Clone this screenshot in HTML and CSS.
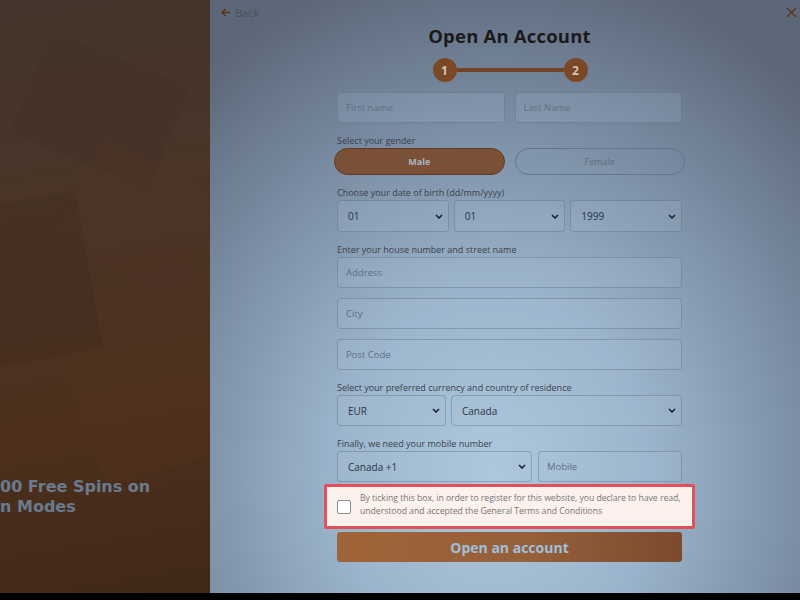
FILE: index.html
```html
<!DOCTYPE html>
<html lang="en">
<head>
<meta charset="utf-8">
<title>Open An Account</title>
<link rel="stylesheet" href="styles.css">
</head>
<body>
<div class="screen">
  <aside class="promo">
    <div class="promo-shape s1"></div>
    <div class="promo-shape s2"></div>
    <div class="promo-shape s3"></div>
    <div class="promo-shape s4"></div>
    <div class="promo-text">
      <div>00 Free Spins on</div>
      <div>n Modes</div>
    </div>
  </aside>
  <main class="panel">
    <div class="topbar">
      <a class="back">
        <svg width="10" height="9" viewBox="0 0 10 9"><path d="M9 4.5H1.5M4.5 1L1 4.5L4.5 8" fill="none" stroke="#5a3418" stroke-width="1.4"/></svg>
        <span>Back</span>
      </a>
      <span class="close">
        <svg width="11" height="11" viewBox="0 0 11 11"><path d="M1 1L10 10M10 1L1 10" stroke="#5a3418" stroke-width="1.4"/></svg>
      </span>
    </div>
    <div class="form">
      <h1 class="title">Open An Account</h1>
      <div class="stepper">
        <span class="step">1</span>
        <span class="step-line"></span>
        <span class="step">2</span>
      </div>

      <div class="row names">
        <input class="field w-half" placeholder="First name">
        <input class="field w-half" placeholder="Last Name">
      </div>

      <div class="label">Select your gender</div>
      <div class="row gender">
        <span class="pill active">Male</span>
        <span class="pill">Female</span>
      </div>

      <div class="label">Choose your date of birth (dd/mm/yyyy)</div>
      <div class="row dob">
        <div class="field select"><span>01</span><svg class="chev" width="8" height="5" viewBox="0 0 8 5"><path d="M1 1L4 4L7 1" fill="none" stroke="#1e232b" stroke-width="1.6"/></svg></div>
        <div class="field select"><span>01</span><svg class="chev" width="8" height="5" viewBox="0 0 8 5"><path d="M1 1L4 4L7 1" fill="none" stroke="#1e232b" stroke-width="1.6"/></svg></div>
        <div class="field select"><span>1999</span><svg class="chev" width="8" height="5" viewBox="0 0 8 5"><path d="M1 1L4 4L7 1" fill="none" stroke="#1e232b" stroke-width="1.6"/></svg></div>
      </div>

      <div class="label">Enter your house number and street name</div>
      <input class="field full" placeholder="Address">
      <input class="field full spaced" placeholder="City">
      <input class="field full spaced" placeholder="Post Code">

      <div class="label">Select your preferred currency and country of residence</div>
      <div class="row currency">
        <div class="field select cur"><span>EUR</span><svg class="chev" width="8" height="5" viewBox="0 0 8 5"><path d="M1 1L4 4L7 1" fill="none" stroke="#1e232b" stroke-width="1.6"/></svg></div>
        <div class="field select country"><span>Canada</span><svg class="chev" width="8" height="5" viewBox="0 0 8 5"><path d="M1 1L4 4L7 1" fill="none" stroke="#1e232b" stroke-width="1.6"/></svg></div>
      </div>

      <div class="label">Finally, we need your mobile number</div>
      <div class="row mobile">
        <div class="field select code"><span>Canada +1</span><svg class="chev" width="8" height="5" viewBox="0 0 8 5"><path d="M1 1L4 4L7 1" fill="none" stroke="#1e232b" stroke-width="1.6"/></svg></div>
        <input class="field phone" placeholder="Mobile">
      </div>

      <div class="terms">
        <span class="checkbox"></span>
        <p>By ticking this box, in order to register for this website, you declare to have read, understood and accepted the General Terms and Conditions</p>
      </div>

      <button class="submit">Open an account</button>
    </div>
  </main>
</div>
</body>
</html>
```
FILE: styles.css
```css
* { box-sizing: border-box; }
html, body { margin: 0; padding: 0; }
body {
  background: #000;
  font-family: "Open Sans", "Liberation Sans", sans-serif;
  width: 800px;
  height: 600px;
  overflow: hidden;
}
.screen {
  display: flex;
  height: 593px;
}
.promo {
  width: 210px;
  flex: none;
  position: relative;
  overflow: hidden;
  background: linear-gradient(170deg, #44352c 0%, #4a3427 35%, #4d301d 70%, #402819 100%);
}
.promo-shape { position: absolute; }
.s1 { left: 25px; top: 55px; width: 150px; height: 110px; background: rgba(60,42,32,0.18); transform: rotate(22deg); }
.s2 { left: 70px; top: 160px; width: 140px; height: 120px; background: rgba(88,58,40,0.14); transform: rotate(25deg); }
.s3 { left: -30px; top: 200px; width: 120px; height: 160px; background: rgba(50,34,24,0.16); transform: rotate(-10deg); }
.s4 { left: 80px; top: 330px; width: 150px; height: 140px; background: rgba(88,54,30,0.12); transform: rotate(-18deg); }
.promo-text {
  position: absolute;
  left: 0;
  top: 477px;
  color: #6a7b90;
  font-family: "DejaVu Sans", sans-serif;
  font-weight: bold;
  font-size: 16px;
  line-height: 20px;
  white-space: nowrap;
}
.panel {
  flex: 1;
  background: radial-gradient(ellipse 460px 520px at 48% 80%, #aec8de 0%, #9bb4cb 35%, #8094aa 62%, #6b7a8f 84%, #5c6777 100%);
  position: relative;
}
.topbar {
  display: flex;
  justify-content: space-between;
  align-items: center;
  height: 24px;
  padding: 0 3px 0 11px;
}
.back {
  display: flex;
  align-items: center;
  gap: 4px;
  font-size: 11px;
  color: #47505c;
}
.close { display: flex; }
.form {
  width: 345px;
  margin-left: 127px;
}
.title {
  margin: 1px 0 0;
  text-align: center;
  font-size: 18.5px;
  line-height: 22px;
  font-weight: 700;
  color: #1c1a19;
  letter-spacing: 0.2px;
}
.stepper {
  display: flex;
  align-items: center;
  width: 156px;
  margin: 11px auto 0;
  padding-left: 1px;
}
.step {
  width: 24px;
  height: 24px;
  border-radius: 50%;
  background: #7b4826;
  color: #d2c5b8;
  font-weight: 700;
  font-size: 12px;
  display: flex;
  align-items: center;
  justify-content: center;
  flex: none;
}
.step-line {
  flex: 1;
  height: 4px;
  background: #744426;
}
.row {
  display: flex;
  gap: 10px;
}
.names { margin-top: 10px; }
.field {
  height: 31px;
  border: 1px solid rgba(80, 96, 118, 0.35);
  border-radius: 4px;
  background: rgba(170, 192, 214, 0.18);
  font-family: inherit;
  font-size: 9.5px;
  color: #2f3641;
  padding: 0 8px;
  outline: none;
  display: block;
}
.field::placeholder { color: #5f6f83; opacity: 1; }
.w-half { flex: 1; min-width: 0; }
.full { width: 100%; }
.spaced { margin-top: 10px; }
.label {
  font-size: 9px;
  line-height: 11px;
  color: #3a414c;
  margin: 12px 0 2px;
}
.gender { gap: 10px; margin: 2px -3px 0; }
.pill {
  flex: 1;
  height: 27px;
  border-radius: 14px;
  border: 1px solid #65768b;
  font-size: 9px;
  color: #5f6e80;
  display: flex;
  align-items: center;
  justify-content: center;
}
.pill.active {
  background: #7a5036;
  border-color: #5e3b24;
  color: #a9b6c4;
  font-weight: 700;
}
.select {
  display: flex;
  align-items: center;
  justify-content: space-between;
  padding: 0 5px 0 10px;
  font-size: 10px;
  color: #2c333d;
}
.dob { gap: 5px; }
.dob .select { flex: 1; height: 32px; }
.currency { gap: 5px; }
.cur { width: 109px; flex: none; }
.country { flex: 1; }
.mobile { gap: 6px; }
.code { width: 195px; flex: none; }
.phone { flex: 1; min-width: 0; }
.terms {
  margin: 2px -13px 0 -13px;
  border: 3px solid #e05257;
  border-radius: 2px;
  background: #fcf1ed;
  display: flex;
  align-items: center;
  gap: 9px;
  padding: 2px 6px 6px 10px;
  height: 45px;
}
.checkbox {
  width: 14px;
  height: 14px;
  border: 1px solid #8c8c8c;
  border-radius: 2px;
  background: #fff;
  flex: none;
  margin-top: 4px;
}
.terms p {
  margin: 0;
  font-size: 8.7px;
  line-height: 13px;
  color: #777;
  letter-spacing: -0.05px;
}
.submit {
  display: block;
  width: 100%;
  height: 30px;
  margin-top: 3px;
  border: none;
  border-radius: 3px;
  background: linear-gradient(90deg, #a06439 0%, #95603a 55%, #7c4b2d 100%);
  color: #a0c0dc;
  font-family: inherit;
  font-size: 14px;
  font-weight: 700;
}
```
